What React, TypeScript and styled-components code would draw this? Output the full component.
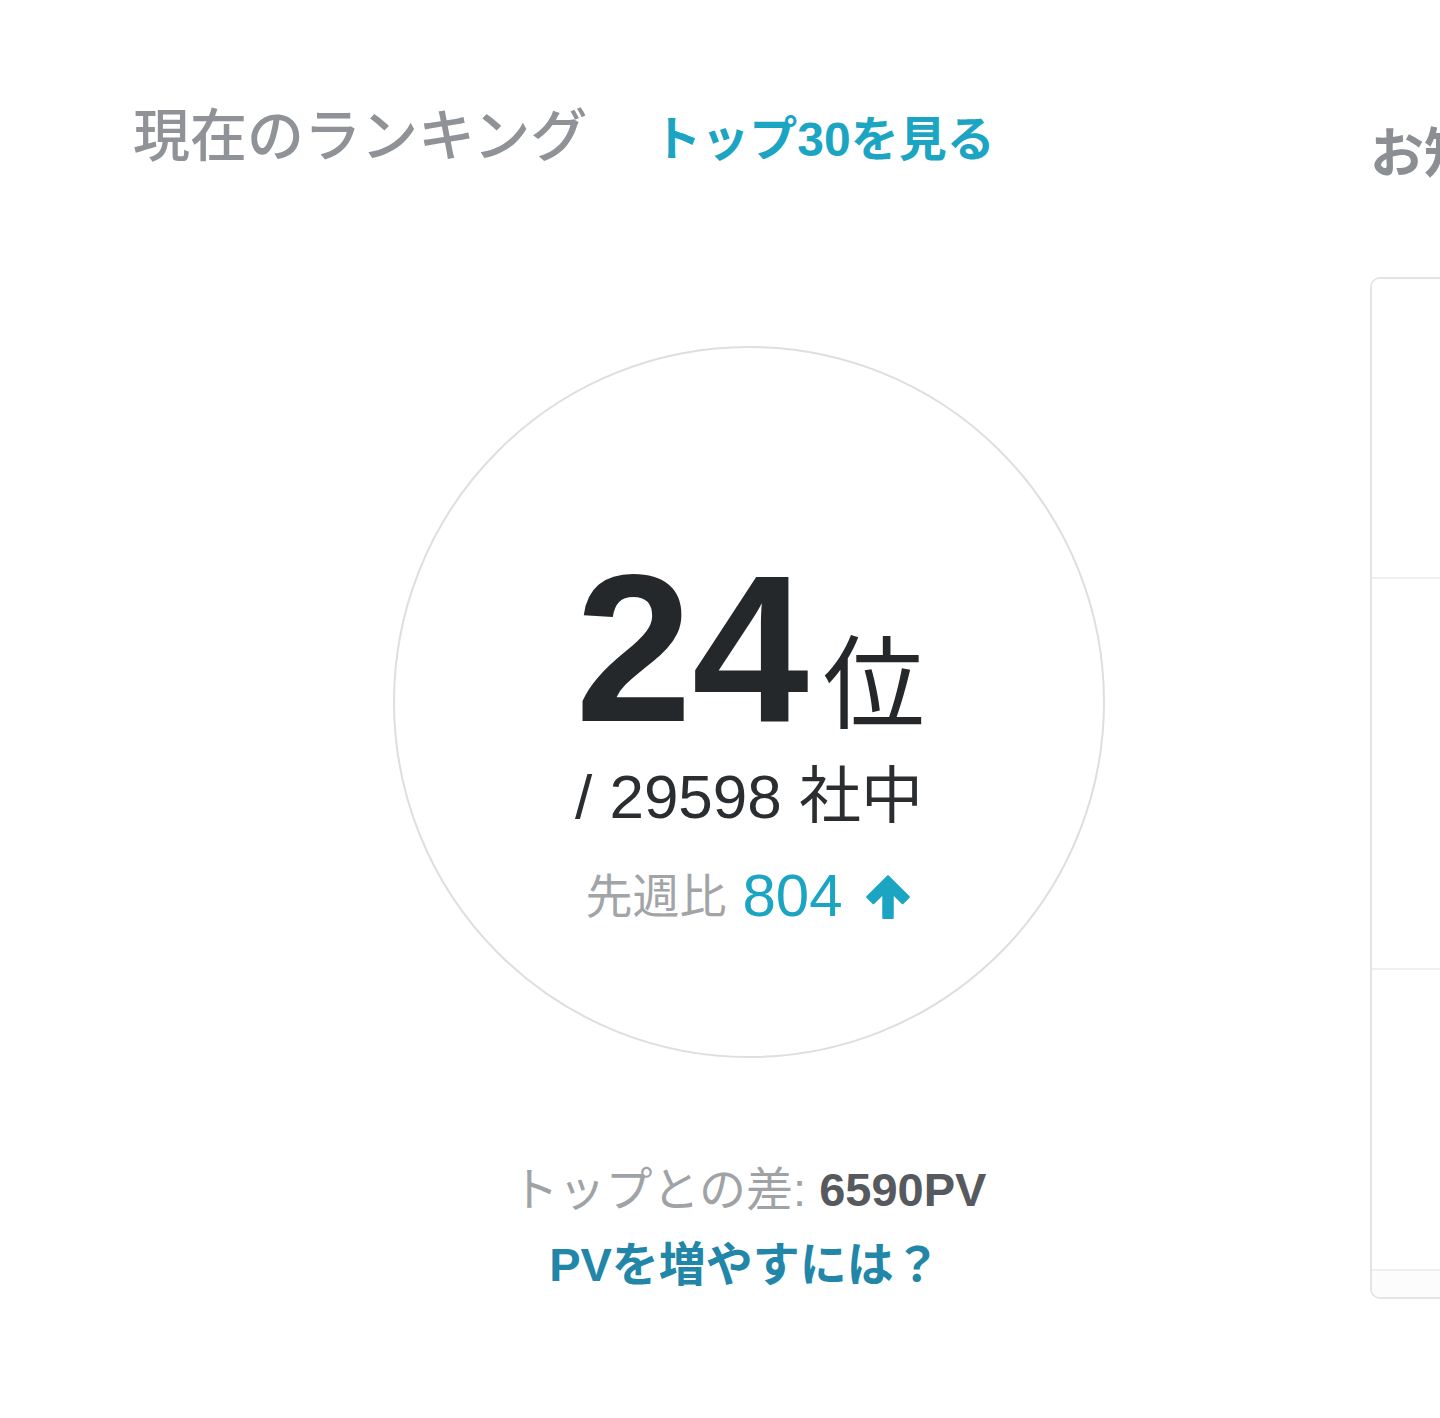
import React from "react";
import styled, { createGlobalStyle } from "styled-components";

const GlobalStyle = createGlobalStyle`
  html, body {
    margin: 0;
    padding: 0;
    background: #ffffff;
    overflow: hidden;
  }
  body {
    font-family: "Liberation Sans", "Noto Sans CJK JP", sans-serif;
    color: #24282b;
  }
`;

const Page = styled.div`
  display: flex;
  width: 1440px;
  height: 1418px;
  overflow: hidden;
`;

const RankingColumn = styled.section`
  flex: 0 0 1232px;
  margin-left: 133px;
  display: flex;
  flex-direction: column;
`;

const HeaderRow = styled.div`
  display: flex;
  align-items: baseline;
  gap: 66px;
  padding-top: 100px;
`;

const Heading = styled.h2`
  margin: 0;
  font-size: 57px;
  line-height: 1.2;
  font-weight: 500;
  color: #8f9297;
`;

const TopLink = styled.a`
  font-size: 48px;
  font-weight: 700;
  color: #1ba5c3;
  text-decoration: none;
  cursor: pointer;
`;

const CircleWrap = styled.div`
  display: flex;
  justify-content: center;
  margin-top: 176px;
`;

const Circle = styled.div`
  width: 712px;
  height: 712px;
  box-sizing: border-box;
  border: 2px solid #dedede;
  border-radius: 50%;
  display: flex;
  flex-direction: column;
  align-items: center;
  padding-top: 196px;
`;

const RankRow = styled.div`
  display: flex;
  align-items: baseline;
  line-height: 1;
  margin-left: 2px;
`;

const RankNumber = styled.span`
  font-size: 210px;
  font-weight: 700;
  letter-spacing: 0;
  color: #24282b;
`;

const RankUnit = styled.span`
  font-family: "Noto Sans CJK JP", sans-serif;
  font-size: 102px;
  font-weight: 400;
  margin-left: 14px;
  color: #24282b;
`;

const TotalRow = styled.div`
  font-size: 62px;
  line-height: 1;
  color: #2a2e31;
  margin-top: 12px;
`;

const WeekRow = styled.div`
  display: flex;
  align-items: center;
  gap: 16px;
  font-size: 50px;
  line-height: 1;
  margin-top: 38px;
`;

const WeekLabel = styled.span`
  color: #a2a5a8;
  font-size: 47px;
`;

const WeekValue = styled.span`
  color: #1ba5c3;
  font-size: 60px;
`;

const ArrowIcon = styled.svg`
  width: 50px;
  height: 48px;
  margin-left: 4px;
`;

const GapBlock = styled.div`
  display: flex;
  flex-direction: column;
  align-items: center;
  margin-top: 104px;
  gap: 18px;
`;

const GapText = styled.div`
  font-size: 47px;
  line-height: 1.2;
  color: #a0a3a6;
`;

const GapValue = styled.span`
  font-weight: 700;
  color: #56595d;
`;

const HelpLink = styled.a`
  font-size: 47px;
  line-height: 1.2;
  font-weight: 700;
  color: #2286a8;
  text-decoration: none;
  margin-left: -8px;
`;

const SideColumn = styled.aside`
  flex: 0 0 auto;
  width: 400px;
  margin-left: 5px;
  display: flex;
  flex-direction: column;
`;

const SideHeading = styled.h2`
  margin: 0;
  padding-top: 122px;
  font-size: 54px;
  line-height: 1.2;
  font-weight: 700;
  color: #8b8e92;
  white-space: nowrap;
`;

const Card = styled.div`
  margin-top: 90px;
  height: 1022px;
  box-sizing: border-box;
  border: 2px solid #e4e4e4;
  border-radius: 10px;
  display: flex;
  flex-direction: column;
  overflow: hidden;
`;

const CardRow = styled.div<{ $h: number; $shade?: boolean }>`
  flex: 0 0 ${(p) => p.$h}px;
  border-bottom: 2px solid #efefef;
  background: ${(p) => (p.$shade ? "#fcfcfc" : "#ffffff")};
  &:last-child {
    border-bottom: none;
    flex: 1 1 auto;
  }
`;

export default function App() {
  return (
    <>
      <GlobalStyle />
      <Page>
        <RankingColumn>
          <HeaderRow>
            <Heading>現在のランキング</Heading>
            <TopLink>トップ30を見る</TopLink>
          </HeaderRow>
          <CircleWrap>
            <Circle>
              <RankRow>
                <RankNumber>24</RankNumber>
                <RankUnit>位</RankUnit>
              </RankRow>
              <TotalRow>/ 29598 社中</TotalRow>
              <WeekRow>
                <WeekLabel>先週比</WeekLabel>
                <WeekValue>804</WeekValue>
                <ArrowIcon viewBox="0 0 48 46" aria-hidden>
                  <path
                    d="M24 4 L44 24 L38 30 L28.5 20.5 L28.5 44 L19.5 44 L19.5 20.5 L10 30 L4 24 Z"
                    fill="#1ba5c3"
                    stroke="#1ba5c3"
                    strokeWidth="2"
                    strokeLinejoin="round"
                  />
                </ArrowIcon>
              </WeekRow>
            </Circle>
          </CircleWrap>
          <GapBlock>
            <GapText>
              トップとの差: <GapValue>6590PV</GapValue>
            </GapText>
            <HelpLink>PVを増やすには？</HelpLink>
          </GapBlock>
        </RankingColumn>
        <SideColumn>
          <SideHeading>お知らせ</SideHeading>
          <Card>
            <CardRow $h={298} />
            <CardRow $h={389} />
            <CardRow $h={299} />
            <CardRow $h={30} $shade />
          </Card>
        </SideColumn>
      </Page>
    </>
  );
}
